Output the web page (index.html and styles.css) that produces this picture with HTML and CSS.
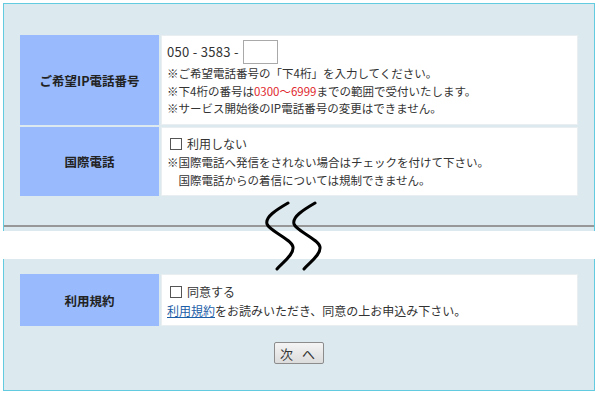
FILE: index.html
```html
<!DOCTYPE html>
<html lang="ja">
<head>
    <meta charset="UTF-8">
    <title>お申込み</title>
    <link rel="stylesheet" href="styles.css">
</head>
<body>
    <div class="sheet">
        <div class="panel panel-top">
            <div class="panel-body">
                <table class="form-table">
                    <tr class="row-ip">
                        <th>ご希望IP電話番号</th>
                        <td>
                            <div class="tel-line">050 - 3583 - <input type="text" class="tel-input" maxlength="4"></div>
                            <p class="note">※ご希望電話番号の「下4桁」を入力してください。</p>
                            <p class="note">※下4桁の番号は<span class="red">0300～6999</span>までの範囲で受付いたします。</p>
                            <p class="note">※サービス開始後のIP電話番号の変更はできません。</p>
                        </td>
                    </tr>
                    <tr class="row-intl">
                        <th>国際電話</th>
                        <td>
                            <label class="check-line"><span class="check"></span>利用しない</label>
                            <p class="note">※国際電話へ発信をされない場合はチェックを付けて下さい。</p>
                            <p class="note">　国際電話からの着信については規制できません。</p>
                        </td>
                    </tr>
                </table>
            </div>
            <div class="cut-line"></div>
        </div>

        <div class="gap"></div>

        <div class="panel panel-bottom">
            <div class="panel-body">
                <table class="form-table">
                    <tr class="row-terms">
                        <th>利用規約</th>
                        <td>
                            <label class="check-line"><span class="check"></span>同意する</label>
                            <p class="note note-terms"><a href="#">利用規約</a>をお読みいただき、同意の上お申込み下さい。</p>
                        </td>
                    </tr>
                </table>
                <div class="actions">
                    <button type="button" class="next-btn">次 へ</button>
                </div>
            </div>
        </div>

        <svg class="omit" width="64" height="74" viewBox="0 0 64 74">
            <path d="M26,3 C14,10 3,17 5,24 C7,31 30,39 31,47 C32,55 20,63 15,69" />
            <path d="M53,3 C41,10 30,17 32,24 C34,31 57,39 58,47 C59,55 47,63 42,69" />
        </svg>
    </div>
</body>
</html>
```

FILE: styles.css
```css
body {
    margin: 0;
    background: #fff;
    font-family: "Noto Sans CJK JP", "Noto Sans", sans-serif;
    color: #333;
}
.sheet {
    position: relative;
    padding-top: 3px;
}
.panel {
    margin: 0 5px 0 3px;
    background: #dce9ef;
    border: 1px solid #62cbe0;
}
.panel-top {
    border-bottom: none;
}
.panel-top .panel-body {
    padding: 29px 14px 0;
}
.panel-bottom {
    border-top: none;
}
.panel-bottom .panel-body {
    padding: 13px 14px 26px;
}
.form-table {
    width: 100%;
    border-collapse: separate;
    border-spacing: 2px;
}
.form-table th {
    width: 139px;
    background: #99bbfd;
    color: #222;
    font-size: 12.5px;
    font-weight: bold;
    text-align: center;
    vertical-align: middle;
    padding: 0;
}
.form-table td {
    background: #fff;
    border: 1px solid #e9eef0;
    text-align: left;
    vertical-align: top;
    padding: 0 5px;
}
.row-ip td {
    height: 84px;
    padding-top: 4px;
}
.row-intl td {
    height: 61px;
    padding-top: 6px;
}
.row-terms td {
    height: 43px;
    padding-top: 7px;
}
.tel-line {
    font-size: 13px;
    line-height: 24px;
    height: 24px;
    margin-bottom: 1px;
    display: flex;
    align-items: center;
    white-space: pre;
    letter-spacing: 0.3px;
}
.tel-input {
    width: 35px;
    height: 24px;
    box-sizing: border-box;
    border: 1px solid #a9a9a9;
    padding: 0;
    margin: 0 0 0 1px;
}
.note {
    margin: 0;
    font-size: 11.5px;
    line-height: 17.5px;
    color: #333;
}
.row-intl .note {
    line-height: 18px;
}
.red {
    color: #e0282e;
}
.check-line {
    display: flex;
    align-items: center;
    font-size: 12px;
    line-height: 19px;
    padding-left: 3px;
}
.check {
    width: 10px;
    height: 10px;
    border: 1px solid #555;
    margin-right: 5px;
}
.note-terms {
    font-size: 12px;
    line-height: 19px;
}
.note-terms a {
    color: #1d5ea8;
}
.cut-line {
    margin-top: 27px;
    height: 4px;
    border-top: 2px solid #979797;
}
.gap {
    height: 28px;
}
.actions {
    display: flex;
    justify-content: center;
    margin-top: 14px;
}
.next-btn {
    width: 50px;
    height: 22px;
    padding: 0;
    font-family: inherit;
    font-size: 13px;
    color: #333;
    letter-spacing: 3px;
    background: linear-gradient(#f4f4f4, #dcdcdc);
    border: 1px solid #8c8c8c;
    border-radius: 2px;
}
.omit {
    position: absolute;
    left: 262px;
    top: 200px;
    fill: none;
    stroke: #000;
    stroke-width: 3;
    stroke-linecap: round;
}
```
